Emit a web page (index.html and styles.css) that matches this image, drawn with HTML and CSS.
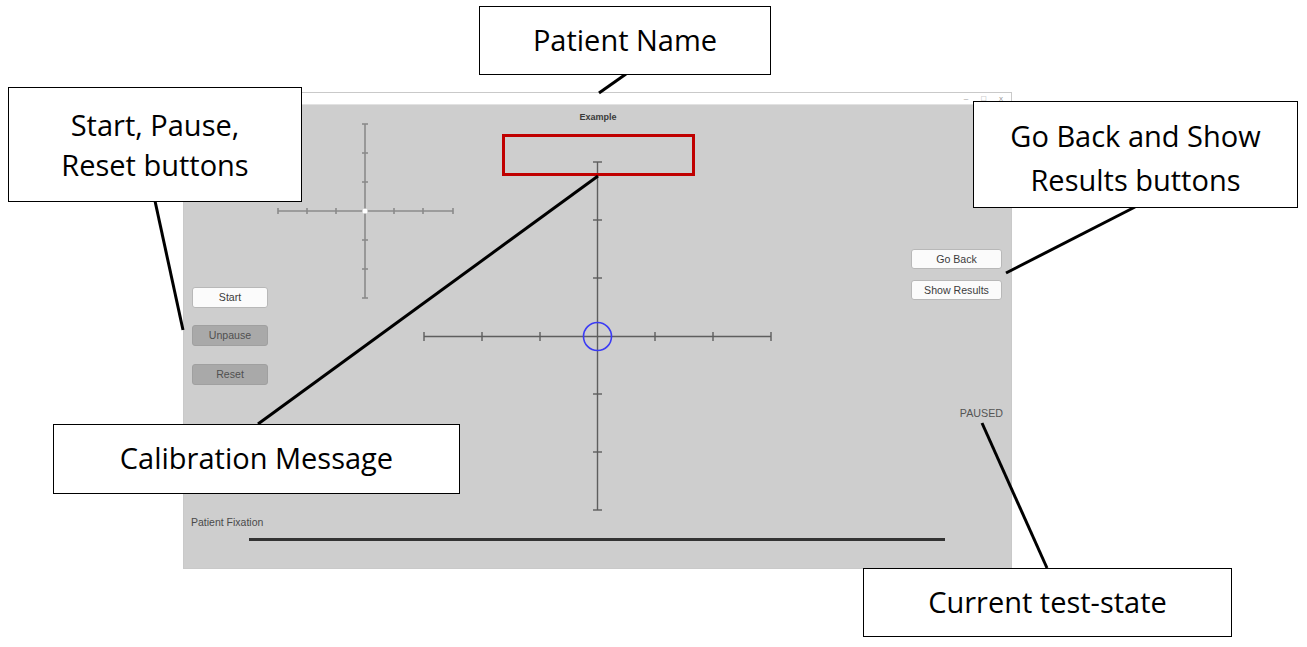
FILE: index.html
```html
<!DOCTYPE html>
<html>
<head>
<meta charset="utf-8">
<title>Example</title>
<link rel="stylesheet" href="styles.css">
</head>
<body>
<div class="page">
  <div class="window">
    <div class="titlebar">
      <span class="ctl">&#8211;</span>
      <span class="ctl">&#9633;</span>
      <span class="ctl">x</span>
    </div>
    <div class="app">
      <svg class="canvas" width="827" height="464" viewBox="0 0 827 464">
        <g transform="translate(-184,-104)">
          <g class="small-cross">
            <line x1="365" y1="124" x2="365" y2="298"/>
            <line x1="278" y1="211" x2="453" y2="211"/>
            <line x1="362" y1="124" x2="368" y2="124"/>
            <line x1="362" y1="153" x2="368" y2="153"/>
            <line x1="362" y1="182" x2="368" y2="182"/>
            <line x1="362" y1="240" x2="368" y2="240"/>
            <line x1="362" y1="269" x2="368" y2="269"/>
            <line x1="362" y1="298" x2="368" y2="298"/>
            <line x1="278" y1="208" x2="278" y2="214"/>
            <line x1="307" y1="208" x2="307" y2="214"/>
            <line x1="336" y1="208" x2="336" y2="214"/>
            <line x1="394" y1="208" x2="394" y2="214"/>
            <line x1="423" y1="208" x2="423" y2="214"/>
            <line x1="453" y1="208" x2="453" y2="214"/>
          </g>
          <circle cx="365" cy="211" r="2.6" fill="#ffffff"/>
          <g class="big-cross">
            <line x1="597.5" y1="162" x2="597.5" y2="510"/>
            <line x1="424" y1="336.5" x2="771" y2="336.5"/>
            <line x1="593" y1="162" x2="602" y2="162"/>
            <line x1="593" y1="220" x2="602" y2="220"/>
            <line x1="593" y1="278" x2="602" y2="278"/>
            <line x1="593" y1="394" x2="602" y2="394"/>
            <line x1="593" y1="452" x2="602" y2="452"/>
            <line x1="593" y1="510" x2="602" y2="510"/>
            <line x1="424" y1="332" x2="424" y2="341"/>
            <line x1="482" y1="332" x2="482" y2="341"/>
            <line x1="540" y1="332" x2="540" y2="341"/>
            <line x1="655" y1="332" x2="655" y2="341"/>
            <line x1="713" y1="332" x2="713" y2="341"/>
            <line x1="771" y1="332" x2="771" y2="341"/>
          </g>
          <circle cx="597.5" cy="336.5" r="14" fill="none" stroke="#3b3bf5" stroke-width="1.6"/>
        </g>
      </svg>
      <div class="app-title">Example</div>
      <div class="app-main">
        <div class="left-col">
          <div class="btn btn-light">Start</div>
          <div class="btn btn-dark">Unpause</div>
          <div class="btn btn-dark btn-last">Reset</div>
        </div>
        <div class="right-col">
          <div class="btn btn-light btn-wide">Go Back</div>
          <div class="btn btn-light btn-wide">Show Results</div>
          <div class="state">PAUSED</div>
        </div>
      </div>
      <div class="footer">
        <div class="fix-label">Patient Fixation</div>
        <div class="fix-bar"></div>
      </div>
    </div>
  </div>

  <div class="highlight"></div>

  <svg class="pointers" width="1307" height="647" viewBox="0 0 1307 647">
    <line x1="626" y1="74" x2="599" y2="93"/>
    <line x1="155" y1="201" x2="183" y2="330"/>
    <line x1="1135" y1="207" x2="1006" y2="273"/>
    <line x1="258" y1="424" x2="598" y2="176"/>
    <line x1="1047" y1="568" x2="982" y2="423"/>
  </svg>

  <div class="callout callout-name">Patient Name</div>
  <div class="callout callout-start">Start, Pause,<br>Reset buttons</div>
  <div class="callout callout-back">Go Back and Show<br>Results buttons</div>
  <div class="callout callout-calib">Calibration Message</div>
  <div class="callout callout-state">Current test-state</div>
</div>
</body>
</html>
```

FILE: styles.css
```css
html, body {
  margin: 0;
  padding: 0;
  background: #ffffff;
}

.page {
  position: relative;
  width: 1307px;
  height: 647px;
  overflow: hidden;
  font-family: "Liberation Sans", Arial, sans-serif;
}

.window {
  position: absolute;
  left: 183px;
  top: 92px;
  width: 829px;
  height: 477px;
  box-sizing: border-box;
  border: 1px solid #c9c9c9;
  display: flex;
  flex-direction: column;
  background: #ffffff;
}

.titlebar {
  height: 11px;
  flex: none;
  display: flex;
  justify-content: flex-end;
  align-items: center;
  gap: 13px;
  padding-right: 8px;
  font-size: 8px;
  line-height: 11px;
  color: #9a9a9a;
}

.ctl {
  display: block;
}

.app {
  position: relative;
  flex: 1;
  background: #cecece;
  display: flex;
  flex-direction: column;
  border-top: 1px solid #e2e2e2;
}

.canvas {
  position: absolute;
  left: 0;
  top: -1px;
  pointer-events: none;
}

.small-cross line {
  stroke: #8b8b8b;
  stroke-width: 1.6;
}

.big-cross line {
  stroke: #5e5e5e;
  stroke-width: 1.4;
}

.app-title {
  position: relative;
  margin-top: 7px;
  height: 10px;
  text-align: center;
  font-size: 9px;
  line-height: 10px;
  font-weight: bold;
  color: #3a3a3a;
  padding-left: 1px;
}

.app-main {
  position: relative;
  display: flex;
  justify-content: space-between;
  padding: 0 9px 0 8px;
}

.left-col {
  display: flex;
  flex-direction: column;
  gap: 17px;
  margin-top: 165px;
}

.btn-last {
  margin-top: 1px;
}

.right-col {
  display: flex;
  flex-direction: column;
  align-items: flex-end;
  gap: 11px;
  margin-top: 127px;
}

.btn {
  box-sizing: border-box;
  width: 76px;
  height: 21px;
  border-radius: 3px;
  font-size: 10.6px;
  line-height: 21px;
  text-align: center;
}

.btn-wide {
  width: 91px;
  height: 20px;
  line-height: 20px;
}

.btn-light {
  background: #fbfbfb;
  border: 1px solid #b8b8b8;
  color: #3c3c3c;
  line-height: 19px;
}

.btn-wide.btn-light {
  line-height: 18px;
}

.btn-dark {
  background: #a9a9a9;
  border: 1px solid #a0a0a0;
  color: #505050;
  line-height: 19px;
}

.state {
  margin-top: 96px;
  font-size: 10.7px;
  line-height: 12px;
  color: #555555;
  margin-right: -1px;
}

.footer {
  position: relative;
  margin-top: auto;
  padding: 0 0 27px 7px;
}

.fix-label {
  font-size: 10.5px;
  line-height: 12px;
  color: #4a4a4a;
}

.fix-bar {
  margin: 10px 0 0 58px;
  width: 696px;
  height: 3px;
  background: #333333;
}

.highlight {
  position: absolute;
  left: 502px;
  top: 134px;
  width: 193px;
  height: 42px;
  box-sizing: border-box;
  border: 3px solid #c00000;
}

.pointers {
  position: absolute;
  left: 0;
  top: 0;
  pointer-events: none;
}

.pointers line {
  stroke: #000000;
  stroke-width: 3;
}

.callout {
  position: absolute;
  box-sizing: border-box;
  background: #ffffff;
  border: 1.5px solid #000000;
  display: flex;
  align-items: center;
  justify-content: center;
  text-align: center;
  font-family: "Open Sans", "Noto Sans", sans-serif;
  font-size: 29px;
  color: #000000;
}

.callout-name {
  left: 479px;
  top: 6px;
  width: 292px;
  height: 69px;
  line-height: 36px;
  padding-bottom: 2px;
}

.callout-start {
  left: 8px;
  top: 87px;
  width: 294px;
  height: 115px;
  line-height: 40px;
}

.callout-back {
  left: 973px;
  top: 101px;
  width: 325px;
  height: 107px;
  line-height: 44px;
  padding-top: 6px;
}

.callout-calib {
  left: 53px;
  top: 424px;
  width: 407px;
  height: 70px;
  line-height: 36px;
  padding-bottom: 3px;
}

.callout-state {
  left: 863px;
  top: 568px;
  width: 369px;
  height: 69px;
  line-height: 36px;
  padding-bottom: 2px;
}
```
